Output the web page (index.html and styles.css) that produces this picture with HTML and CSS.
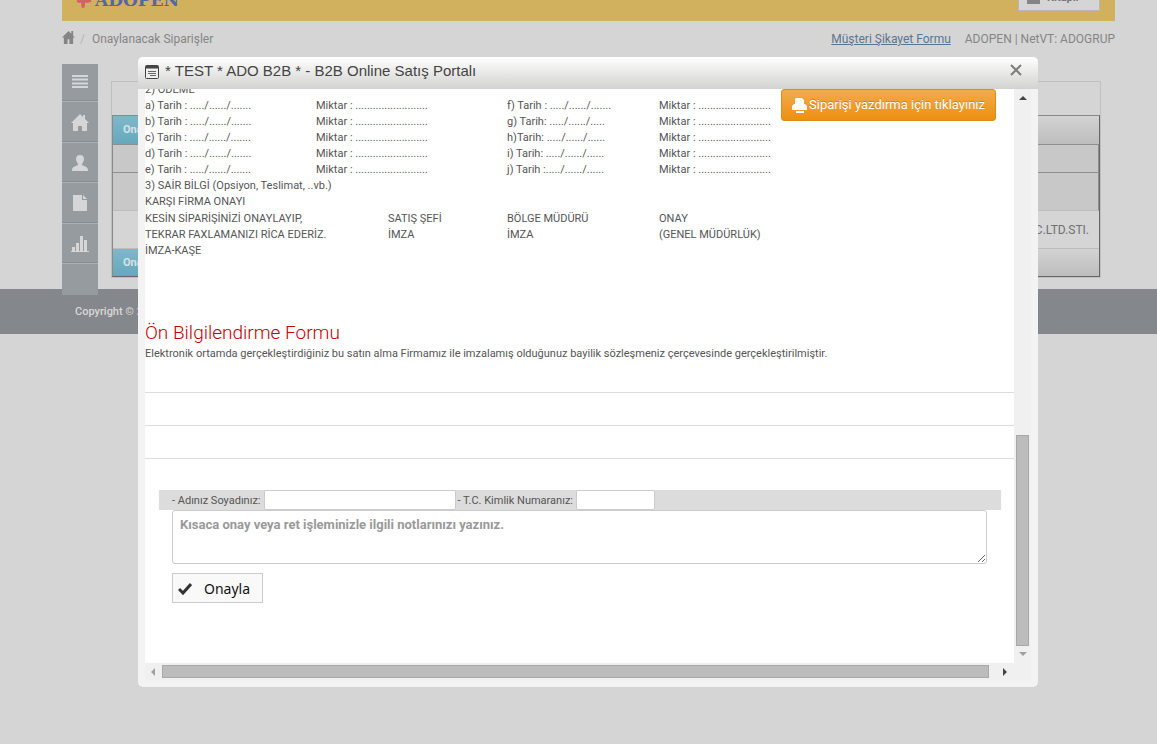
FILE: index.html
```html
<!DOCTYPE html>
<html lang="tr">
<head>
<meta charset="utf-8">
<title>B2B Online Satış Portalı</title>
<link rel="stylesheet" href="styles.css">
</head>
<body>
<div class="container">
  <header class="banner">
    <div class="logo">
      <svg width="18" height="18" viewBox="0 0 20 20" aria-hidden="true"><g fill="none" stroke="#d6606a" stroke-width="4" stroke-linecap="round"><path d="M4 11h10M9 4v13M5 6l4 5"/></g><path d="M14 11h4" stroke="#d6606a" stroke-width="3"/></svg>
      <span>ADOPEN</span>
    </div>
    <button class="banner-button" type="button"><span class="square-icon"></span>Kitaplı</button>
  </header>
  <nav class="crumbs">
    <svg width="13" height="13" viewBox="0 0 14 14" aria-hidden="true"><path fill="#858585" d="M7 0 0 7h2v7h4V9h2v5h4V7h2l-2-2V0h-2v3z"/></svg>
    <span class="slash">/</span>
    <span>Onaylanacak Siparişler</span>
    <a class="complaint" href="#">Müşteri Şikayet Formu</a>
    <span class="account">ADOPEN | NetVT: ADOGRUP</span>
  </nav>
  <div class="main">
    <aside class="sidebar">
      <a href="#" aria-label="Menü"><svg width="16" height="13" viewBox="0 0 16 13"><path d="M0 1h16M0 4.500h16M0 8.500h16M0 12h16" stroke="#d6d6d6" stroke-width="2"/></svg></a>
      <a href="#" aria-label="Ana sayfa"><svg width="18" height="17" viewBox="0 0 18 17"><path fill="#d6d6d6" d="M9 0 0 9h2v8h5v-5h4v5h5V9h2l-4-4V1h-2v2z"/></svg></a>
      <a href="#" aria-label="Kullanıcı"><svg width="18" height="16" viewBox="0 0 18 16"><path fill="#d6d6d6" d="M9 0C6 0 5 2 5 4c0 2 1 3 2 5v1c-2 1-6 2-6 5v1h16v-1c0-3-4-4-6-5V9c1-2 2-3 2-5 0-2-1-4-4-4z"/></svg></a>
      <a href="#" aria-label="Belge"><svg width="14" height="16" viewBox="0 0 14 16"><path fill="#d6d6d6" d="M0 0h9v5h5v11H0zM10 0l4 4h-4z"/></svg></a>
      <a href="#" aria-label="Rapor"><svg width="18" height="16" viewBox="0 0 18 16"><path fill="#d6d6d6" d="M0 15h18v1H0zM1 11h3v4H1zM5 7h3v8H5zM9 0h3v15H9zM13 4h3v11h-3z"/></svg></a>
    </aside>
    <section class="panel">
      <div class="panel-top"></div>
      <div class="grid">
        <div class="grid-bar top"><button type="button">Onayla</button></div>
        <div class="grid-head"></div>
        <div class="grid-filter"></div>
        <div class="grid-row">SAN.TIC.LTD.STI.</div>
        <div class="grid-bar"><button type="button">Onayla</button></div>
      </div>
    </section>
  </div>
</div>
<footer class="footer">Copyright © 2014</footer>

<div class="modal" role="dialog" aria-labelledby="modal-title">
  <div class="modal-header">
    <svg width="14" height="14" viewBox="0 0 14 14" aria-hidden="true"><rect x=".5" y=".5" width="13" height="13" rx="1" fill="#eee" stroke="#444"/><path d="M1 2h12" stroke="#444" stroke-width="3"/><path d="M3 6.500h8M3 8.500h8M5 10.500h6" stroke="#666"/></svg>
    <h1 id="modal-title">* TEST * ADO B2B * - B2B Online Satış Portalı</h1>
    <button class="close" type="button" aria-label="Kapat"><svg width="12" height="12" viewBox="0 0 12 12"><path d="M1 1l10 10M11 1 1 11" stroke="#7d7d7d" stroke-width="2"/></svg></button>
  </div>
  <div class="modal-body">
    <div class="viewport">
      <button class="print" type="button"><svg width="15" height="15" viewBox="0 0 15 15" aria-hidden="true"><path fill="#fff" d="M4 0h6l2 2v4h1l2 2v4H0V8l2-2h1V1zM4 13h8v2H4z"/></svg>Siparişi yazdırma için tıklayınız</button>
      <div class="document">
        <table class="terms">
          <colgroup><col class="c1"><col class="c2"><col class="c3"><col class="c4"><col></colgroup>
          <tbody>
            <tr><td colspan="5">2) ÖDEME</td></tr>
            <tr><td>a) Tarih : ...../....../.......</td><td colspan="2">Miktar : .........................</td><td>f) Tarih : ...../....../.......</td><td>Miktar : .........................</td></tr>
            <tr><td>b) Tarih : ...../....../.......</td><td colspan="2">Miktar : .........................</td><td>g) Tarih: ...../....../.....</td><td>Miktar : .........................</td></tr>
            <tr><td>c) Tarih : ...../....../.......</td><td colspan="2">Miktar : .........................</td><td>h)Tarih: ...../....../......</td><td>Miktar : .........................</td></tr>
            <tr><td>d) Tarih : ...../....../.......</td><td colspan="2">Miktar : .........................</td><td>i) Tarih: ...../....../......</td><td>Miktar : .........................</td></tr>
            <tr><td>e) Tarih : ...../....../.......</td><td colspan="2">Miktar : .........................</td><td>j) Tarih :...../....../......</td><td>Miktar : .........................</td></tr>
            <tr><td colspan="5">3) SAİR BİLGİ (Opsiyon, Teslimat, ..vb.)</td></tr>
            <tr><td colspan="5">KARŞI FİRMA ONAYI</td></tr>
          </tbody>
          <tbody class="signatures">
            <tr><td colspan="2">KESİN SİPARİŞİNİZİ ONAYLAYIP,</td><td>SATIŞ ŞEFİ</td><td>BÖLGE MÜDÜRÜ</td><td>ONAY</td></tr>
            <tr><td colspan="2">TEKRAR FAXLAMANIZI RİCA EDERİZ.</td><td>İMZA</td><td>İMZA</td><td>(GENEL MÜDÜRLÜK)</td></tr>
            <tr><td colspan="5">İMZA-KAŞE</td></tr>
          </tbody>
        </table>
        <h2>Ön Bilgilendirme Formu</h2>
        <p>Elektronik ortamda gerçekleştirdiğiniz bu satın alma Firmamız ile imzalamış olduğunuz bayilik sözleşmeniz çerçevesinde gerçekleştirilmiştir.</p>
        <hr><hr><hr>
        <form class="approval">
          <div class="identity">
            <label for="name">- Adınız Soyadınız:</label><input class="name" id="name" type="text">
            <label for="tc">- T.C. Kimlik Numaranız:</label><input class="tc" id="tc" type="text">
          </div>
          <textarea aria-label="Notlar" placeholder="Kısaca onay veya ret işleminizle ilgili notlarınızı yazınız."></textarea>
          <button class="approve" type="button"><svg width="14" height="12" viewBox="0 0 14 12" aria-hidden="true"><path d="M1 6l4 4L13 1" fill="none" stroke="#333" stroke-width="3"/></svg>Onayla</button>
        </form>
      </div>
    </div>
    <div class="vscroll">
      <svg width="8" height="4" viewBox="0 0 8 4"><path fill="#444" d="M0 4 4 0l4 4z"/></svg>
      <div class="vthumb"></div>
      <svg width="8" height="4" viewBox="0 0 8 4"><path fill="#a0a0a0" d="M0 0h8L4 4z"/></svg>
    </div>
    <div class="hscroll">
      <svg width="4" height="8" viewBox="0 0 4 8"><path fill="#a0a0a0" d="M4 0v8L0 4z"/></svg>
      <div class="hthumb"></div>
      <svg width="4" height="8" viewBox="0 0 4 8"><path fill="#444" d="M0 0v8l4-4z"/></svg>
    </div>
  </div>
</div>
</body>
</html>
```
FILE: styles.css
```css
* { box-sizing: border-box; }
body { margin: 0; background: #d5d5d5; font: 12px/16px Roboto, "Open Sans", sans-serif; color: #858585; }
button { font: inherit; cursor: pointer; }
svg { flex: none; display: block; }

.container { margin: 0 42px 0 62px; }
.banner { height: 21px; overflow: hidden; display: flex; justify-content: space-between; align-items: flex-end; padding: 0 15px 10px 13px; background: #d1b15e; }
.logo { display: flex; align-items: flex-end; gap: 2px; color: #5068a5; font: bold 17px/17px "DejaVu Serif", serif; }
.logo span { margin-bottom: 2px; }
.logo svg { margin-bottom: 2px; }
.banner-button { display: flex; align-items: center; gap: 7px; width: 82px; height: 26px; padding: 0 8px; border: 1px solid #b8b8b8; background: #d5d5d5; color: #777; font-size: 11px; font-weight: bold; }
.square-icon { width: 13px; height: 12px; background: #858585; }
.crumbs { display: flex; align-items: center; height: 36px; margin-bottom: 7px; }
.crumbs svg { margin-bottom: 4px; }
.slash { margin: 0 7px 0 5px; color: #b5b5b5; }
.complaint { margin-left: auto; color: #5b7590; text-decoration: underline; }
.account { margin-left: 14px; }

.main { display: flex; align-items: flex-start; height: 225px; padding-right: 14px; }
.sidebar { position: relative; z-index: 1; flex: none; width: 36px; height: 231px; background: #969ba0; }
.sidebar a { display: flex; align-items: center; justify-content: center; height: 41px; border-bottom: 1px solid #adb1b5; box-shadow: inset 0 -1px #888d92; }
.sidebar a:first-child { height: 38px; padding-bottom: 3px; }
.sidebar a:nth-child(3), .sidebar a:last-child { height: 40px; }
.panel { flex: 1; margin: 17px 0 0 13px; border: 1px solid #bfbfbf; }
.panel-top { height: 33px; }
.grid { border: 1px solid #8a8a8a; border-right-color: #666; border-bottom-color: #666; }
.grid-bar { height: 27px; background: linear-gradient(#d3d3d3, #bdbdbd); }
.grid-bar.top { height: 29px; border-bottom: 1px solid #8e8e8e; }
.grid-bar button { display: block; width: 70px; height: 100%; padding: 0 10px; border: 0; background: linear-gradient(#7fb7c9, #66a8bd); color: #d8e2e5; font-size: 11px; font-weight: bold; text-align: left; }
.grid-head { height: 28px; border-right: 1px solid #8e8e8e; border-bottom: 1px solid #8e8e8e; background: #c8c8c8; }
.grid-filter { height: 38px; border-right: 1px solid #8e8e8e; border-bottom: 1px solid #bdbdbd; background: #c8c8c8; }
.grid-row { height: 38px; padding: 11px 10px; border-bottom: 1px solid #bdbdbd; text-align: right; color: #707070; }

.footer { height: 45px; padding: 15px 75px 14px; background: #84878b; color: #d8d8d8; font-size: 11px; font-weight: 500; }

.modal { position: absolute; top: 57px; left: 138px; width: 900px; padding-bottom: 7px; border-radius: 5px; background: #f3f3f3; overflow: hidden; }
.modal-header { display: flex; align-items: center; height: 32px; padding: 0 15px 2px 7px; background: linear-gradient(#fff, #d2d2d0); }
.modal-header h1 { margin: 0 0 2px 6px; color: #444; font: 15px/18px "Liberation Sans", Arial, sans-serif; }
.close { display: flex; margin: 0 0 4px auto; padding: 1px; border: 0; background: none; }
.modal-body { display: grid; grid-template-columns: 1fr 17px; grid-template-rows: auto 17px; margin: 0 7px; }
.viewport { position: relative; overflow: hidden; background: #fff; color: #555; font-size: 11px; }
.document { margin-top: -7px; padding-bottom: 60px; }
.print { position: absolute; top: 0; right: 18px; display: flex; align-items: center; gap: 2px; height: 32px; padding: 0 10px; border: 1px solid #e08c14; border-radius: 3px; background: linear-gradient(#f3ab4c, #ec9010); color: #fff; font-size: 13px; text-shadow: 0 -1px 0 rgba(0, 0, 0, .2); }

.terms { width: 100%; table-layout: fixed; border-collapse: collapse; }
.terms td { padding: 0; white-space: nowrap; }
.c1 { width: 171px; } .c2 { width: 72px; } .c3 { width: 119px; } .c4 { width: 152px; }
.signatures::before { content: ""; display: block; height: 1px; }
h2 { margin: 63px 0 0; color: #c40000; font-size: 19px; font-weight: 300; line-height: 22px; }
.document p { margin: 2px 0 30px; }
hr { margin: 0 0 32px; border: 0; border-top: 1px solid #ddd; }
hr:last-of-type { margin-bottom: 31px; }

.approval { margin: 0 13px 0 14px; }
.identity { display: flex; height: 20px; padding-left: 13px; background: #dcdcdc; line-height: 21px; }
.identity label { white-space: nowrap; }
.identity input { height: 20px; padding: 0 4px; border: 1px solid #ccc; border-radius: 2px; margin: 0 2px 0 3px; background: #fff; font: inherit; }
.name { width: 192px; } .tc { width: 79px; }
textarea { display: block; width: calc(100% - 27px); height: 54px; margin: 0 14px 9px 13px; padding: 5px 7px; border: 1px solid #ccc; border-radius: 3px; font: bold 13px/18px Roboto, sans-serif; resize: vertical; }
textarea::placeholder { color: #999; }
.approve { display: flex; align-items: center; gap: 12px; height: 30px; margin-left: 13px; padding: 2px 12px 0 5px; border: 1px solid #ccc; background: #f9f9f9; color: #111; font: 14px/18px "Noto Sans", "Open Sans", sans-serif; }

.vscroll, .hscroll { display: flex; align-items: center; background: #f0f0f0; }
.vscroll { flex-direction: column; padding: 7px 0; }
.vthumb { width: 13px; height: 211px; margin: auto 0 6px; border: 1px solid #a8a8a8; background: #bcbcbc; }
.hscroll { grid-column: 1 / 3; padding: 0 24px 0 6px; }
.hthumb { flex: 1; height: 13px; margin: 0 14px 0 7px; border: 1px solid #a8a8a8; background: #bcbcbc; }
```
